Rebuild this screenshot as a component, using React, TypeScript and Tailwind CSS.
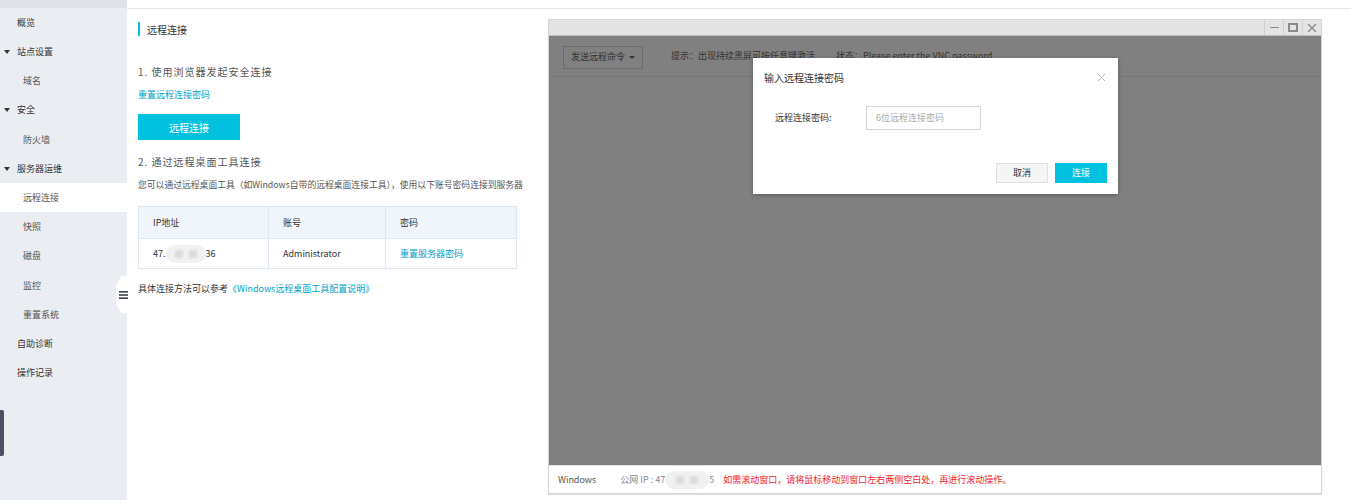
import React from "react";

const sideItems: { label: string; kind: "top" | "group" | "sub"; active?: boolean }[] = [
  { label: "概览", kind: "top" },
  { label: "站点设置", kind: "group" },
  { label: "域名", kind: "sub" },
  { label: "安全", kind: "group" },
  { label: "防火墙", kind: "sub" },
  { label: "服务器运维", kind: "group" },
  { label: "远程连接", kind: "sub", active: true },
  { label: "快照", kind: "sub" },
  { label: "磁盘", kind: "sub" },
  { label: "监控", kind: "sub" },
  { label: "重置系统", kind: "sub" },
  { label: "自助诊断", kind: "top" },
  { label: "操作记录", kind: "top" },
];

function Blur({ w }: { w: number }) {
  return (
    <span
      className="relative inline-flex items-center justify-center gap-[6px] h-[18px] rounded-full bg-[#f1f1f1] align-middle"
      style={{ width: w }}
    >
      <span className="w-[8px] h-[8px] bg-[#dcdcdc] blur-[1px]" />
      <span className="w-[8px] h-[8px] bg-[#dcdcdc] blur-[1px]" />
    </span>
  );
}

export default function App() {
  return (
    <div className="relative flex w-[1351px] h-[500px] bg-white font-['Noto_Sans_CJK_SC',sans-serif] text-[9px] text-[#333] overflow-hidden">
      {/* Sidebar */}
      <aside className="w-[127px] shrink-0 bg-[#eaedf1] flex flex-col">
        <div className="h-[8px] bg-[#dfe3e8]" />
        {sideItems.map((it) => (
          <div
            key={it.label}
            className={`h-[29.2px] flex items-center ${it.active ? "bg-white" : ""}`}
          >
            {it.kind === "group" && (
              <>
                <span className="ml-[4px] w-0 h-0 border-l-[3.5px] border-r-[3.5px] border-t-[4px] border-l-transparent border-r-transparent border-t-[#333]" />
                <span className="ml-[7px] text-[#333]">{it.label}</span>
              </>
            )}
            {it.kind === "top" && <span className="ml-[17px] text-[#333]">{it.label}</span>}
            {it.kind === "sub" && <span className="ml-[23px] text-[#555]">{it.label}</span>}
          </div>
        ))}
      </aside>

      {/* dark handle */}
      <div className="absolute left-0 top-[410px] w-[4px] h-[46px] bg-[#4b5160] rounded-r-[2px]" />
      {/* collapse toggle */}
      <div className="absolute left-[116px] top-[276px] w-[13px] h-[37px] bg-white [clip-path:polygon(40%_0,100%_0,100%_100%,40%_100%,0_75%,0_25%)] flex items-center justify-end pr-[1px]">
        <svg width="9" height="8" viewBox="0 0 9 8">
          <rect x="0" y="0" width="9" height="1.6" fill="#3a3f4b" />
          <rect x="0" y="3.2" width="9" height="1.6" fill="#3a3f4b" />
          <rect x="0" y="6.4" width="9" height="1.6" fill="#3a3f4b" />
        </svg>
      </div>

      {/* Main */}
      <main className="flex-1 flex flex-col min-w-0">
        <div className="h-[9px] border-b border-[#e6e6e6] shrink-0" />
        <div className="flex flex-1 min-h-0">
          {/* left content */}
          <section className="w-[421px] shrink-0 pl-[11px] pt-[13px]">
            <div className="flex items-center h-[14px]">
              <span className="w-[2px] h-[14px] bg-[#00c1de]" />
              <span className="ml-[7px] text-[10px] text-[#333]">远程连接</span>
            </div>
            <div className="mt-[29px] h-[14px] text-[10px] tracking-[1px] text-[#555] leading-[14px]">1. 使用浏览器发起安全连接</div>
            <div className="mt-[10px] h-[12px] text-[9px] text-[#00a2ca] leading-[12px]">重置远程连接密码</div>
            <button className="mt-[13px] w-[102px] h-[26px] bg-[#00c1de] text-white text-[10px] flex items-center justify-center">
              远程连接
            </button>
            <div className="mt-[15px] h-[14px] text-[10px] tracking-[1px] text-[#555] leading-[14px]">2. 通过远程桌面工具连接</div>
            <div className="mt-[10px] h-[12px] text-[8.8px] text-[#555] leading-[12px] whitespace-nowrap">
              您可以通过远程桌面工具（如Windows自带的远程桌面连接工具），使用以下账号密码连接到服务器
            </div>
            <div className="mt-[15px] w-[379px] border border-[#dde8f5]">
              <div className="flex h-[32px] bg-[#f1f6fd] border-b border-[#dde8f5]">
                <div className="w-[130px] border-r border-[#dde8f5] flex items-center pl-[14px] text-[#333]">IP地址</div>
                <div className="w-[117px] border-r border-[#dde8f5] flex items-center pl-[14px] text-[#333]">账号</div>
                <div className="flex-1 flex items-center pl-[14px] text-[#333]">密码</div>
              </div>
              <div className="flex h-[29px]">
                <div className="w-[130px] border-r border-[#dde8f5] flex items-center pl-[14px] text-[#333]">
                  <span>47.</span>
                  <Blur w={40} />
                  <span>36</span>
                </div>
                <div className="w-[117px] border-r border-[#dde8f5] flex items-center pl-[14px] text-[#333]">Administrator</div>
                <div className="flex-1 flex items-center pl-[14px] text-[#00a2ca]">重置服务器密码</div>
              </div>
            </div>
            <div className="mt-[14px] h-[12px] text-[9px] text-[#333] leading-[12px]">
              具体连接方法可以参考<span className="text-[#00a2ca]">《Windows远程桌面工具配置说明》</span>
            </div>
          </section>

          {/* VNC window */}
          <div className="pt-[10px]">
            <div className="w-[774px] h-[475px] border border-[#d6d6d6] shadow-[0_1px_1px_rgba(0,0,0,0.12)] flex flex-col">
              {/* title bar */}
              <div className="h-[16px] bg-[#e4e4e4] border-b border-[#bdbdbd] flex justify-end shrink-0">
                <div className="w-[19px] border-l border-[#cfcfcf] flex items-center justify-center">
                  <span className="w-[9px] h-[1.5px] bg-[#8a8a8a]" />
                </div>
                <div className="w-[19px] border-l border-[#cfcfcf] flex items-center justify-center">
                  <span className="w-[10px] h-[9px] border-[2px] border-[#8a8a8a]" />
                </div>
                <div className="w-[19px] border-l border-[#cfcfcf] flex items-center justify-center">
                  <svg width="10" height="10" viewBox="0 0 10 10">
                    <path d="M1 1L9 9M9 1L1 9" stroke="#8a8a8a" strokeWidth="1.3" />
                  </svg>
                </div>
              </div>
              {/* body */}
              <div className="relative flex-1 bg-[#808080]">
                <div className="h-[41px] border-b border-[#777] flex items-center">
                  <div className="ml-[14px] mt-[2px] w-[80px] h-[23px] border border-[#6b6b6b] flex items-center justify-center text-[#333]">
                    发送远程命令
                    <span className="ml-[4px] w-0 h-0 border-l-[3px] border-r-[3px] border-t-[3.5px] border-l-transparent border-r-transparent border-t-[#333]" />
                  </div>
                  <span className="ml-[28px] text-[#333]">提示：出现持续黑屏可按任意键激活</span>
                  <span className="ml-[21px] text-[#333]">状态：Please enter the VNC password</span>
                </div>
                {/* modal */}
                <div className="absolute left-[204px] top-[22px] w-[365px] h-[136px] bg-white shadow-[0_1px_4px_rgba(0,0,0,0.3)] flex flex-col">
                  <div className="flex items-center justify-between h-[38px] pl-[11px] pr-[12px]">
                    <span className="text-[10px] text-[#333]">输入远程连接密码</span>
                    <svg width="9" height="9" viewBox="0 0 9 9">
                      <path d="M1 1L8 8M8 1L1 8" stroke="#b5b5b5" strokeWidth="1" />
                    </svg>
                  </div>
                  <div className="flex items-center mt-[10px] h-[24px]">
                    <span className="ml-[22px] w-[91px] text-[#333]">远程连接密码:</span>
                    <div className="w-[115px] h-[24px] border border-[#d6d6d6] flex items-center pl-[9px] text-[#aaa]">
                      6位远程连接密码
                    </div>
                  </div>
                  <div className="flex justify-end gap-[7px] mt-[33px] pr-[11px]">
                    <button className="w-[52px] h-[20px] bg-[#f5f5f5] border border-[#e0e0e0] text-[#333] text-[9px] flex items-center justify-center">
                      取消
                    </button>
                    <button className="w-[52px] h-[20px] bg-[#00c1de] text-white text-[9px] flex items-center justify-center">
                      连接
                    </button>
                  </div>
                </div>
              </div>
              {/* bottom bar */}
              <div className="h-[28px] bg-white flex items-center shrink-0 border-t border-[#e0e0e0]">
                <span className="ml-[9px] text-[#555]">Windows</span>
                <span className="ml-[24px] text-[#888]">公网 IP : 47</span>
                <Blur w={44} />
                <span className="text-[#888]">5</span>
                <span className="ml-[9px] text-[#f0242a]">如需滚动窗口，请将鼠标移动到窗口左右两侧空白处，再进行滚动操作。</span>
              </div>
            </div>
          </div>
        </div>
      </main>
    </div>
  );
}
